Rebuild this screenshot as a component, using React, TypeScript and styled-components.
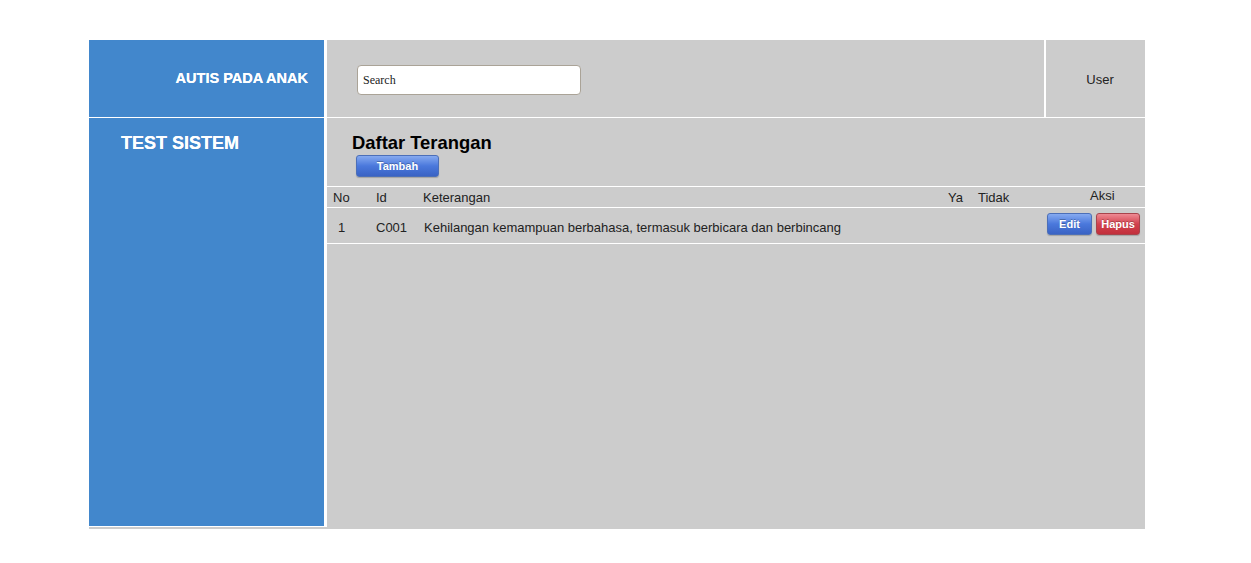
import React from "react";
import styled, { createGlobalStyle, css } from "styled-components";

const GlobalStyle = createGlobalStyle`
  html, body { margin: 0; padding: 0; background: #ffffff; }
  body { font-family: "Liberation Sans", Arial, sans-serif; }
  * { box-sizing: border-box; }
`;

const BLUE = "#4287cc";
const GRAY = "#cccccc";

const Frame = styled.div`
  margin: 40px 0 0 89px;
  width: 1056px;
  height: 489px;
  background: ${GRAY};
  display: grid;
  grid-template-columns: 238px 1fr;
  grid-template-rows: 78px 409px;
`;

const BrandCell = styled.div`
  background: ${BLUE};
  border-right: 3px solid #ffffff;
  border-bottom: 1px solid #ffffff;
  display: flex;
  align-items: center;
  justify-content: flex-end;
  padding: 0 16px 2px 0;
  color: #ffffff;
  font-weight: bold;
  font-size: 14.5px;
  text-shadow: 0 0 0.6px #ffffff;
`;

const TopBar = styled.div`
  display: flex;
  border-bottom: 1px solid #ffffff;
`;

const SearchArea = styled.div`
  flex: 1;
  padding: 25px 0 0 30px;
`;

const SearchInput = styled.input`
  width: 224px;
  height: 30px;
  border: 1px solid #aaa397;
  border-radius: 4px;
  background: #ffffff;
  padding: 0 5px;
  font-family: "Liberation Serif", "Times New Roman", serif;
  font-size: 12px;
  color: #222;
  outline: none;
  &::placeholder { color: #222; }
`;

const UserCell = styled.div`
  width: 101px;
  border-left: 2px solid #ffffff;
  display: flex;
  align-items: center;
  justify-content: center;
  padding: 2px 0 0 9px;
  font-size: 13px;
  color: #222;
`;

const SideNav = styled.div`
  background: ${BLUE};
  border-right: 3px solid #ffffff;
  border-bottom: 1px solid #ffffff;
  height: 409px;
  padding: 14px 0 0 32px;
  color: #ffffff;
  font-weight: bold;
  font-size: 18px;
  line-height: 22px;
  text-shadow: 0 0 0.6px #ffffff;
`;

const Content = styled.div`
  display: flex;
  flex-direction: column;
`;

const Title = styled.h3`
  margin: 15px 0 0 25px;
  font-size: 18.4px;
  line-height: 20px;
  font-weight: bold;
  color: #000;
`;

const Button = styled.button<{ $variant?: "blue" | "red"; $w: number }>`
  width: ${(p) => p.$w}px;
  height: 22px;
  border-radius: 3px;
  font-family: "Liberation Sans", Arial, sans-serif;
  font-weight: bold;
  font-size: 11px;
  color: #ffffff;
  padding: 0;
  cursor: pointer;
  text-shadow: 0 -1px 0 rgba(0, 0, 0, 0.25);
  box-shadow: 0 1px 1px rgba(0, 0, 0, 0.2);
  ${(p) =>
    p.$variant === "red"
      ? css`
          background: linear-gradient(#ee8a93, #d2424e 50%, #c2303c);
          border: 1px solid #a8444c;
        `
      : css`
          background: linear-gradient(#86aaf0, #4a78dc 50%, #3a63c4);
          border: 1px solid #4c6fb8;
        `}
`;

const AddButton = styled(Button)`
  margin: 2px 0 0 29px;
`;

const Table = styled.div`
  margin-top: 9px;
  border-top: 1px solid #ffffff;
  font-size: 13px;
  color: #222;
`;

const Row = styled.div<{ $head?: boolean }>`
  display: grid;
  grid-template-columns: 43px 47px 525px 30px 69px 1fr;
  height: ${(p) => (p.$head ? 21 : 36)}px;
  border-bottom: 1px solid #ffffff;
  align-items: center;
`;

const Cell = styled.div<{ $pl?: number; $pt?: number }>`
  padding-left: ${(p) => p.$pl ?? 6}px;
  padding-top: ${(p) => p.$pt ?? 0}px;
  white-space: nowrap;
`;

const HeadAction = styled(Cell)`
  margin-top: -3px;
`;

const Actions = styled.div`
  display: flex;
  gap: 4px;
  padding-left: 6px;
  padding-bottom: 4px;
`;

export default function App() {
  return (
    <>
      <GlobalStyle />
      <Frame>
        <BrandCell>AUTIS PADA ANAK</BrandCell>
        <TopBar>
          <SearchArea>
            <SearchInput placeholder="Search" />
          </SearchArea>
          <UserCell>User</UserCell>
        </TopBar>
        <SideNav>TEST SISTEM</SideNav>
        <Content>
          <Title>Daftar Terangan</Title>
          <AddButton $w={83}>Tambah</AddButton>
          <Table>
            <Row $head>
              <Cell>No</Cell>
              <Cell>Id</Cell>
              <Cell>Keterangan</Cell>
              <Cell>Ya</Cell>
              <Cell>Tidak</Cell>
              <HeadAction $pl={49}>Aksi</HeadAction>
            </Row>
            <Row>
              <Cell $pl={11} $pt={4}>1</Cell>
              <Cell $pt={4}>C001</Cell>
              <Cell $pl={7} $pt={4}>Kehilangan kemampuan berbahasa, termasuk berbicara dan berbincang</Cell>
              <Cell />
              <Cell />
              <Actions>
                <Button $w={45}>Edit</Button>
                <Button $variant="red" $w={44}>Hapus</Button>
              </Actions>
            </Row>
          </Table>
        </Content>
      </Frame>
    </>
  );
}
